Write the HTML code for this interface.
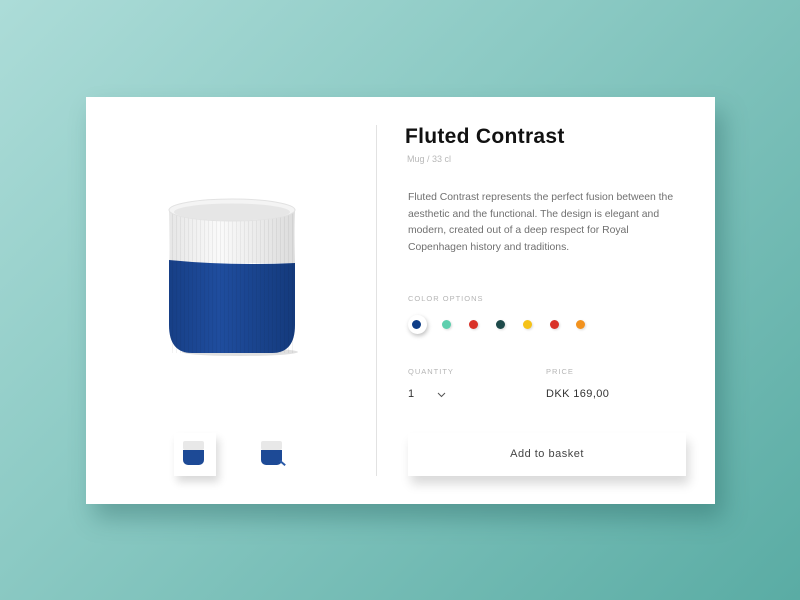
<!DOCTYPE html>
<html><head><meta charset="utf-8"><style>
*{margin:0;padding:0;box-sizing:border-box}
body{width:800px;height:600px;overflow:hidden;position:relative;font-family:"Liberation Sans",sans-serif;
background:linear-gradient(135deg,#acdcd8 0%,#8ccac4 40%,#5aaca4 100%)}
.card{position:absolute;left:86px;top:97px;width:629px;height:407px;background:#fff;box-shadow:8px 14px 22px rgba(30,90,85,.35)}
.div{position:absolute;left:376px;top:125px;width:1px;height:351px;background:#e2e2e2}
.t{position:absolute;white-space:nowrap}
h1{position:absolute;left:405px;top:125px;font-size:21px;font-weight:700;color:#111;letter-spacing:.3px}
.sub{left:407px;top:154px;font-size:9px;color:#b8b8b8}
.desc{position:absolute;left:408px;top:190px;width:275px;font-size:10.4px;line-height:16.5px;color:#707070}
.lab{font-size:7.5px;color:#b5b5b5;letter-spacing:1px}
.dot{position:absolute;width:9px;height:9px;border-radius:50%;top:320px;box-shadow:1px 1px 2px rgba(0,0,0,.15)}
.btn{position:absolute;left:408px;top:433px;width:278px;height:43px;background:#fff;box-shadow:3px 8px 10px rgba(0,0,0,.15);text-align:center;line-height:43px;font-size:11px;color:#444;letter-spacing:.5px}
.th{position:absolute;background:#fff}
</style></head><body>
<div class="card"></div>
<div class="div"></div>
<svg style="position:absolute;left:160px;top:190px" width="145" height="175">
<defs><linearGradient id="w" x1="0" x2="1"><stop offset="0" stop-color="#e6e6e6"/><stop offset=".4" stop-color="#fafafa"/><stop offset="1" stop-color="#dcdcdc"/></linearGradient>
<linearGradient id="b" x1="0" x2="1"><stop offset="0" stop-color="#173f86"/><stop offset=".4" stop-color="#1f4d9e"/><stop offset="1" stop-color="#143a7c"/></linearGradient>
<pattern id="f" width="4" height="10" patternUnits="userSpaceOnUse"><rect width="1" height="10" fill="#000" opacity=".05"/></pattern></defs>
<ellipse cx="80" cy="162" rx="58" ry="4" fill="#000" opacity=".12"/>
<path d="M9 20 Q10 70 9 73 L135 73 Q134 40 135 20 Z" fill="url(#w)"/>
<path d="M9 70 Q70 76 135 73 L135 135 Q135 163 112 163 L32 163 Q9 163 9 135 Z" fill="url(#b)"/>
<rect x="9" y="20" width="126" height="143" fill="url(#f)"/>
<ellipse cx="72" cy="20" rx="63" ry="11" fill="#f4f4f4" stroke="#e2e2e2"/>
<ellipse cx="72" cy="22" rx="58" ry="8.5" fill="#e6e6e6"/>
</svg>
<div class="th" style="left:174px;top:433px;width:42px;height:43px;box-shadow:3px 6px 8px rgba(0,0,0,.15)"></div>
<div style="position:absolute;left:183px;top:441px;width:21px;height:9px;background:#e8e8e8;border-radius:2px"></div>
<div style="position:absolute;left:183px;top:450px;width:21px;height:15px;background:#1d4a96;border-radius:0 0 5px 5px"></div>
<div style="position:absolute;left:261px;top:441px;width:21px;height:9px;background:#e8e8e8;border-radius:2px"></div>
<div style="position:absolute;left:261px;top:450px;width:21px;height:15px;background:#1d4a96;border-radius:0 0 5px 5px"></div>
<div style="position:absolute;left:279px;top:462px;width:7px;height:2px;background:#2a5aa8;transform:rotate(40deg)"></div>
<h1>Fluted Contrast</h1>
<div class="t sub">Mug / 33 cl</div>
<div class="desc">Fluted Contrast represents the perfect fusion between the aesthetic and the functional. The design is elegant and modern, created out of a deep respect for Royal Copenhagen history and traditions.</div>
<div class="t lab" style="left:408px;top:294px">COLOR OPTIONS</div>
<div style="position:absolute;left:408px;top:315px;width:19px;height:19px;border-radius:50%;background:#fff;box-shadow:1px 2px 4px rgba(0,0,0,.25)"></div>
<div class="dot" style="left:412px;background:#0f3e87;box-shadow:none"></div>
<div class="dot" style="left:442px;background:#5ecfae"></div>
<div class="dot" style="left:469px;background:#d93228"></div>
<div class="dot" style="left:496px;background:#1d4a4a"></div>
<div class="dot" style="left:523px;background:#f5c218"></div>
<div class="dot" style="left:550px;background:#d93228"></div>
<div class="dot" style="left:576px;background:#f2921e"></div>
<div class="t lab" style="left:408px;top:367px">QUANTITY</div>
<div class="t lab" style="left:546px;top:367px">PRICE</div>
<div class="t" style="left:408px;top:388px;font-size:11px;color:#333">1</div>
<svg style="position:absolute;left:437px;top:392px" width="9" height="6"><path d="M1 1 L4.5 4.5 L8 1" fill="none" stroke="#555" stroke-width="1"/></svg>
<div class="t" style="left:546px;top:388px;font-size:11px;color:#333;letter-spacing:.4px">DKK 169,00</div>
<div class="btn">Add to basket</div>
</body></html>
